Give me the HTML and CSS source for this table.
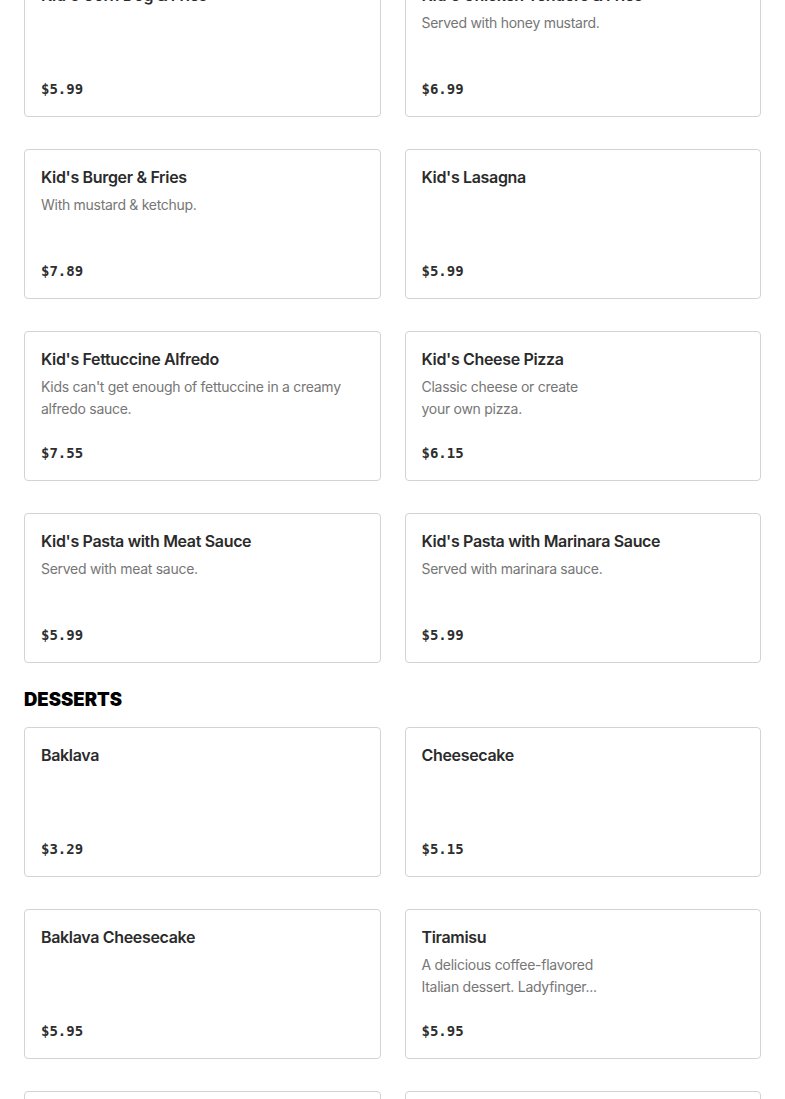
FILE: index.html
```html
<!DOCTYPE html>
<html>
<head>
<meta charset="utf-8">
<link rel="stylesheet" href="styles.css">
</head>
<body>
<main class="menu">
  <section class="section first">
    <div class="grid">
      <div class="card"><div class="title">Kid's Corn Dog &amp; Fries</div><div class="price">$5.99</div></div>
      <div class="card"><div class="title">Kid's Chicken Tenders &amp; Fries</div><div class="desc">Served with honey mustard.</div><div class="price">$6.99</div></div>
      <div class="card"><div class="title">Kid's Burger &amp; Fries</div><div class="desc">With mustard &amp; ketchup.</div><div class="price">$7.89</div></div>
      <div class="card"><div class="title">Kid's Lasagna</div><div class="price">$5.99</div></div>
      <div class="card"><div class="title">Kid's Fettuccine Alfredo</div><div class="desc">Kids can't get enough of fettuccine in a creamy alfredo sauce.</div><div class="price">$7.55</div></div>
      <div class="card"><div class="title">Kid's Cheese Pizza</div><div class="desc">Classic cheese or create<br>your own pizza.</div><div class="price">$6.15</div></div>
      <div class="card"><div class="title">Kid's Pasta with Meat Sauce</div><div class="desc">Served with meat sauce.</div><div class="price">$5.99</div></div>
      <div class="card"><div class="title">Kid's Pasta with Marinara Sauce</div><div class="desc">Served with marinara sauce.</div><div class="price">$5.99</div></div>
    </div>
  </section>
  <section class="section">
    <h2 class="heading">DESSERTS</h2>
    <div class="grid">
      <div class="card"><div class="title">Baklava</div><div class="price">$3.29</div></div>
      <div class="card"><div class="title">Cheesecake</div><div class="price">$5.15</div></div>
      <div class="card"><div class="title">Baklava Cheesecake</div><div class="price">$5.95</div></div>
      <div class="card"><div class="title">Tiramisu</div><div class="desc">A delicious coffee-flavored<br>Italian dessert. Ladyfinger...</div><div class="price">$5.95</div></div>
      <div class="card"><div class="title">Chocolate Cake</div><div class="price">$5.95</div></div>
      <div class="card"><div class="title">Cannoli</div><div class="price">$4.25</div></div>
    </div>
  </section>
</main>
</body>
</html>
```
FILE: styles.css
```css
html, body {
  margin: 0;
  padding: 0;
  background: #ffffff;
}
body {
  font-family: "Inter", "Noto Sans", sans-serif;
  color: #2d2d2d;
  overflow: hidden;
}
.menu {
  padding: 0 24px;
  margin-top: -33px;
}
.section + .section {
  margin-top: 24px;
}
.heading {
  margin: 0 0 16px 0;
  font-family: "Inter", sans-serif;
  font-weight: 900;
  font-size: 18.5px;
  line-height: 24px;
  color: #000;
}
.grid {
  display: grid;
  grid-template-columns: 1fr 1fr;
  column-gap: 24px;
  row-gap: 32px;
}
.card {
  box-sizing: border-box;
  height: 150px;
  border: 1px solid #d3d3d3;
  border-radius: 4px;
  padding: 16px;
  display: flex;
  flex-direction: column;
}
.title {
  font-size: 16px;
  font-weight: 600;
  line-height: 24px;
  letter-spacing: -0.33px;
  color: #2b2b2b;
  margin-top: -1px;
  margin-bottom: 5px;
}
.desc {
  font-size: 14px;
  line-height: 22px;
  letter-spacing: -0.28px;
  color: #767676;
}
.price {
  margin-top: auto;
  font-family: "DejaVu Sans Mono", monospace;
  font-weight: 700;
  font-size: 14px;
  line-height: 22px;
  color: #2e2e2e;
}
```
